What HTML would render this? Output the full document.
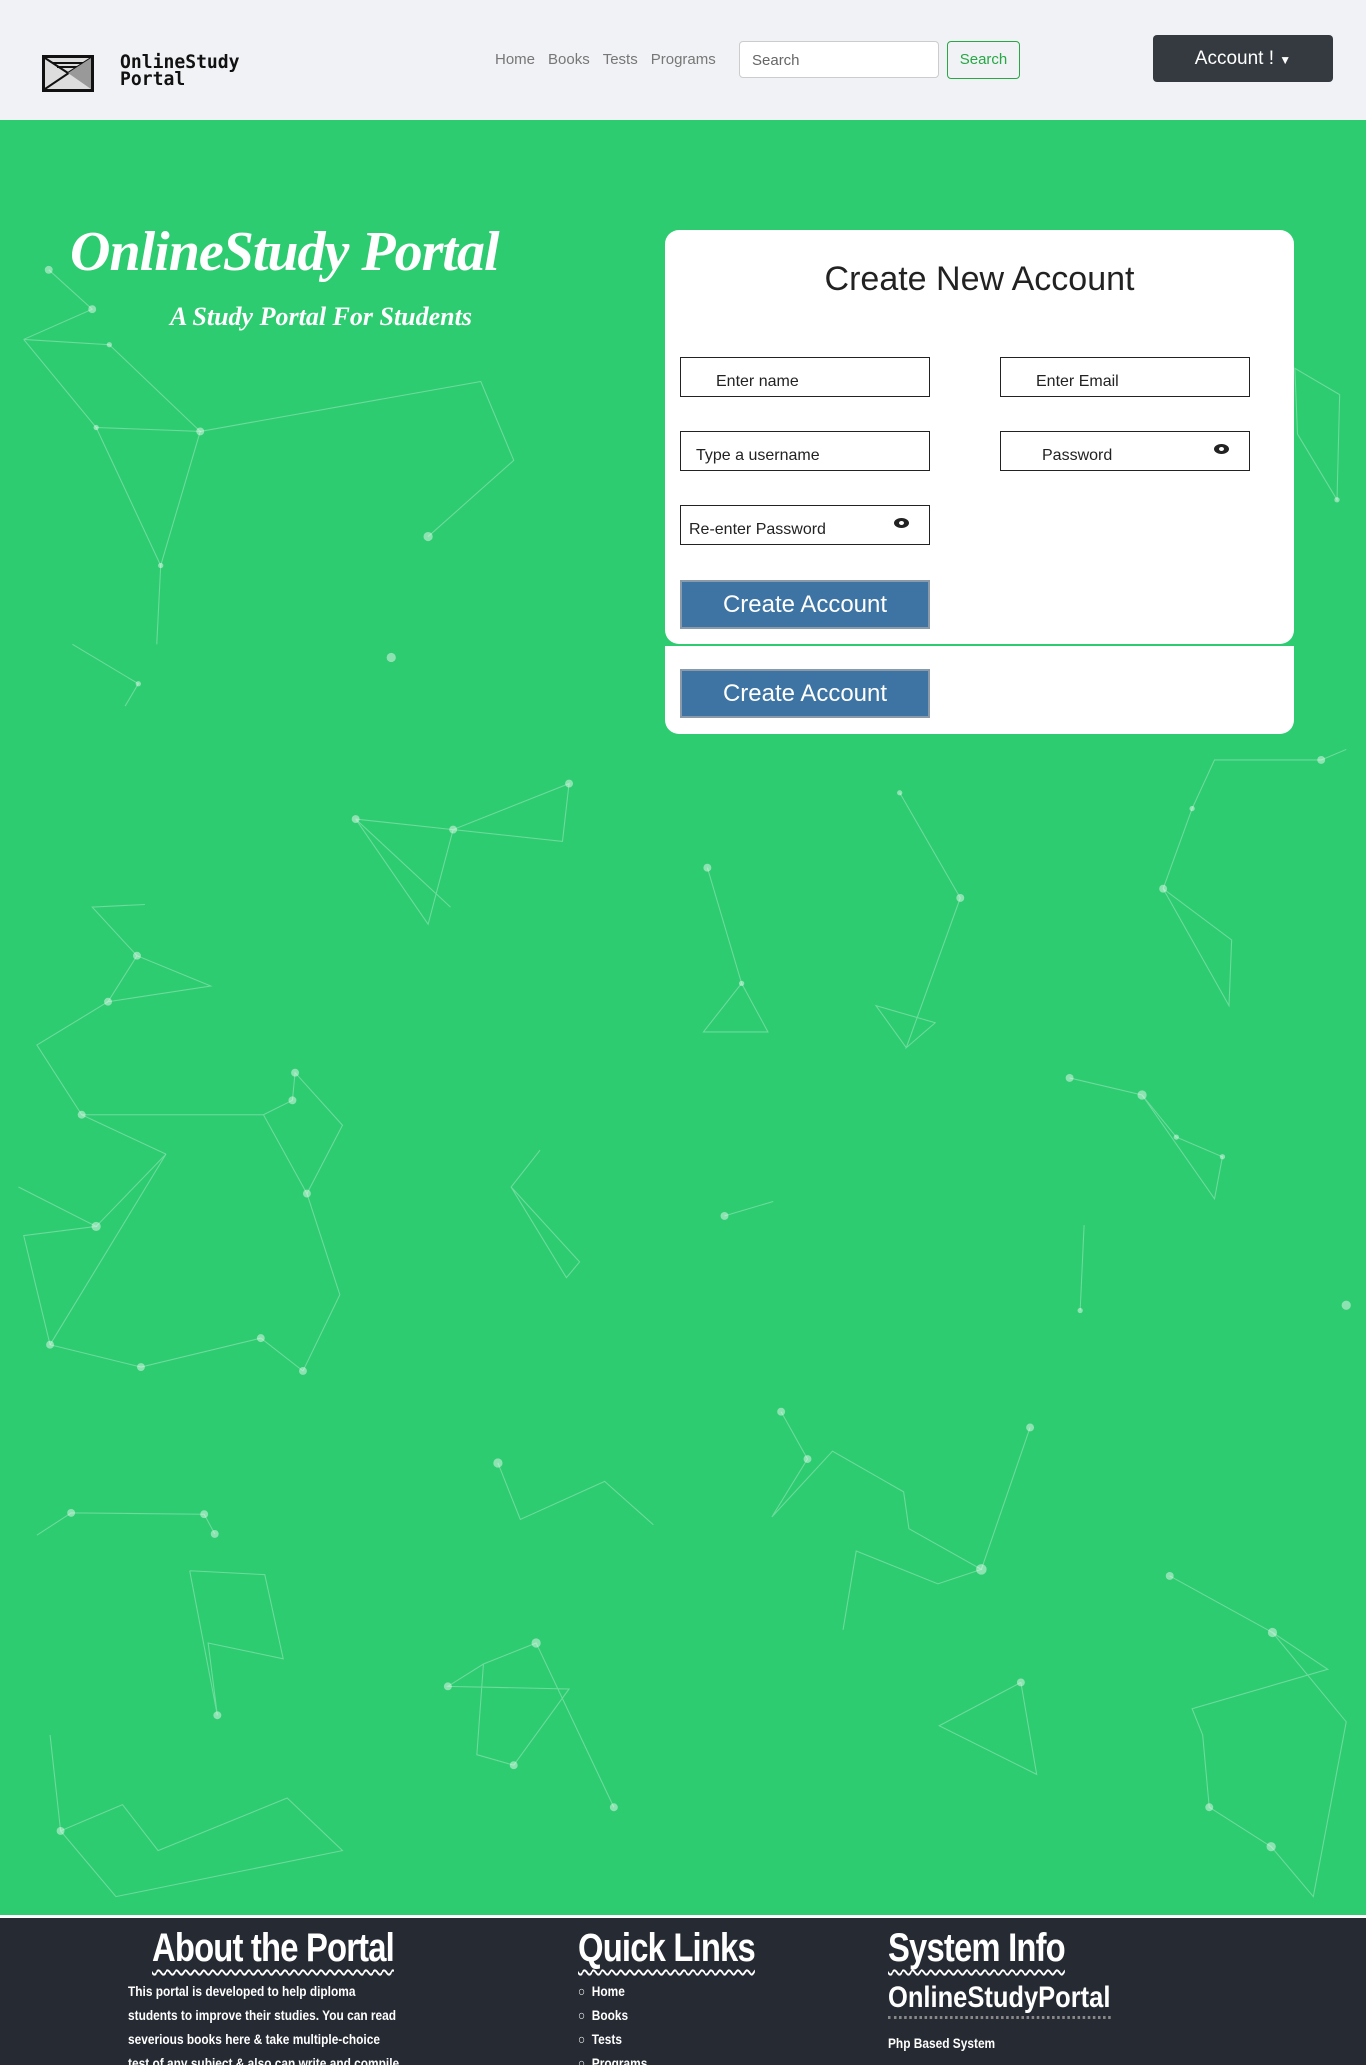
<!DOCTYPE html>
<html style="overflow:hidden;background:#262a33"><head><meta charset="utf-8"><style>
*{box-sizing:border-box;margin:0;padding:0}
body{width:1366px;height:2065px;overflow:hidden;font-family:"Liberation Sans",sans-serif;background:#2ecc71;position:relative}
.nav{position:absolute;left:0;top:0;width:1366px;height:120px;background:#f0f2f5}
.logo{position:absolute;left:42px;top:55px;width:52px;height:37px;border:3px solid #111;background:#ddd}
.logotxt{position:absolute;left:120px;top:54px;font:bold 19px/17px "DejaVu Sans Mono","Liberation Mono",monospace;color:#111;transform:scaleX(0.95);transform-origin:left}
.links{position:absolute;left:495px;top:51px;font-size:15px;color:#777}
.links span{margin-right:13px}
.sin{position:absolute;left:739px;top:41px;width:200px;height:37px;background:#fff;border:1px solid #ccc;border-radius:4px;font-size:15px;color:#666;padding:10px 12px}
.sbtn{position:absolute;left:947px;top:41px;width:73px;height:38px;border:1px solid #28a745;border-radius:4px;color:#28a745;font-size:15px;text-align:center;line-height:36px}
.acc{position:absolute;left:1153px;top:35px;width:180px;height:47px;background:#343a40;border-radius:4px;color:#fff;font-size:19px;text-align:center;line-height:47px}
.title{position:absolute;left:70px;top:220px;font:italic bold 56px "Liberation Serif",serif;color:#fff;letter-spacing:-1px}
.sub{position:absolute;left:170px;top:302px;font:italic bold 26px "Liberation Serif",serif;color:#fff}
.card{position:absolute;left:665px;top:230px;width:629px;height:414px;background:#fff;border-radius:14px}
.card2{position:absolute;left:665px;top:646px;width:629px;height:88px;background:#fff;border-radius:0 0 14px 14px}
.h{position:absolute;left:0;width:629px;top:30px;text-align:center;font-size:34px;color:#222}
.in{position:absolute;width:250px;height:40px;border:1.5px solid #222;font-size:16px;color:#222;padding-top:15px}
.eye{position:absolute;right:20px;top:12px;width:15px;height:10px;border-radius:50%;background:#222}
.eye:after{content:"";position:absolute;left:5px;top:3px;width:5px;height:4px;border-radius:50%;background:#fff}
.btn{position:absolute;left:15px;width:250px;height:49px;background:#3e74a3;border:2px solid #8a9aa8;color:#fff;font-size:24px;text-align:center;line-height:45px}
.foot{position:absolute;left:0;top:1915px;width:1366px;height:200px;background:#262a33;border-top:3px solid #fff}
.fh{position:absolute;top:8px;font:bold 40px "Liberation Sans",sans-serif;color:#fff;letter-spacing:-1px;text-decoration:underline wavy #fff;text-underline-offset:8px;text-decoration-thickness:2px;transform:scaleX(0.82);transform-origin:left}
.ft{position:absolute;font:bold 14px/24px "Liberation Sans",sans-serif;color:#fff;transform:scaleX(0.85);transform-origin:left;white-space:nowrap}
</style></head><body>
<svg style="position:absolute;left:0;top:120px" width="1366" height="1795" viewBox="0 91 1037 1366" preserveAspectRatio="none">
<g stroke="rgba(255,255,255,0.3)" stroke-width="0.8" fill="none">
<polyline points="37,205 70,235 18,258 83,262 152,328 73,325 18,258"/><polyline points="152,328 122,430 73,325"/><polyline points="325,408 390,350 365,290 152,328"/><polyline points="122,430 119,490"/><polyline points="55,490 105,520 95,537"/>
<polyline points="270,623 344,631 432,596 427,640 344,631 325,703 270,623 342,690"/><polyline points="537,660 563,748 534,785 583,785 563,748"/><polyline points="683,603 729,683 688,797 710,778 665,765 688,797"/>
<polyline points="883,676 935,715 933,765 883,676 905,615 922,578 1003,578 1022,570"/><polyline points="812,820 867,833 893,865 928,880 922,912 867,833"/><polyline points="823,932 820,997"/><polyline points="550,925 587,914"/><polyline points="388,903 440,960 430,972 388,903 410,875"/>
<polyline points="104,727 82,762 160,750 104,727 70,690 110,688"/><polyline points="82,762 28,795 62,848 126,878 62,848 200,848 222,837 224,816 260,856 233,908 200,848"/><polyline points="14,903 73,933 18,940 38,1023 107,1040 198,1018 230,1043 258,985 233,908"/><polyline points="73,933 126,878 38,1023"/>
<polyline points="593,1074 613,1110 586,1154 632,1104 686,1135 690,1163 745,1194 712,1205 650,1180 640,1240"/><polyline points="782,1086 745,1194"/><polyline points="888,1199 966,1242 1008,1270 905,1300 913,1320 918,1375 965,1405 997,1443 1022,1310 966,1242"/><polyline points="775,1280 787,1350 713,1313 775,1280"/>
<polyline points="378,1113 395,1156 459,1127 496,1160"/><polyline points="163,1167 155,1152 54,1151 28,1168"/><polyline points="144,1195 201,1198 215,1262 158,1250 165,1305 144,1195"/><polyline points="407,1250 367,1266 340,1283 432,1285 390,1343 362,1335 367,1266 407,1250 466,1375"/><polyline points="38,1320 46,1393 93,1373 120,1408 218,1368 260,1408 88,1443 46,1393"/><polyline points="1017,300 1015,380 985,330 983,280 1017,300"/>
</g>
<g fill="rgba(255,255,255,0.45)">
<circle cx="37" cy="205" r="3"/><circle cx="70" cy="235" r="3"/><circle cx="83" cy="262" r="2"/><circle cx="152" cy="328" r="3"/><circle cx="73" cy="325" r="2"/><circle cx="122" cy="430" r="2"/><circle cx="325" cy="408" r="3.5"/><circle cx="297" cy="500" r="3.5"/><circle cx="105" cy="520" r="2"/><circle cx="270" cy="623" r="3"/><circle cx="344" cy="631" r="3"/><circle cx="432" cy="596" r="3"/><circle cx="537" cy="660" r="3"/><circle cx="563" cy="748" r="2"/><circle cx="683" cy="603" r="2"/><circle cx="729" cy="683" r="3"/><circle cx="883" cy="676" r="3"/><circle cx="905" cy="615" r="2"/><circle cx="1003" cy="578" r="3"/><circle cx="812" cy="820" r="3"/><circle cx="867" cy="833" r="3.5"/><circle cx="893" cy="865" r="2"/><circle cx="928" cy="880" r="2"/><circle cx="820" cy="997" r="2"/><circle cx="1022" cy="993" r="3.5"/><circle cx="550" cy="925" r="3"/><circle cx="104" cy="727" r="3"/><circle cx="82" cy="762" r="3"/><circle cx="62" cy="848" r="3"/><circle cx="222" cy="837" r="3"/><circle cx="224" cy="816" r="3"/><circle cx="233" cy="908" r="3"/><circle cx="73" cy="933" r="3.5"/><circle cx="38" cy="1023" r="3"/><circle cx="107" cy="1040" r="3"/><circle cx="198" cy="1018" r="3"/><circle cx="230" cy="1043" r="3"/><circle cx="593" cy="1074" r="3"/><circle cx="613" cy="1110" r="3"/><circle cx="782" cy="1086" r="3"/><circle cx="745" cy="1194" r="4"/><circle cx="888" cy="1199" r="3"/><circle cx="966" cy="1242" r="3.5"/><circle cx="918" cy="1375" r="3"/><circle cx="965" cy="1405" r="3.5"/><circle cx="775" cy="1280" r="3"/><circle cx="378" cy="1113" r="3.5"/><circle cx="163" cy="1167" r="3"/><circle cx="155" cy="1152" r="3"/><circle cx="54" cy="1151" r="3"/><circle cx="407" cy="1250" r="3.5"/><circle cx="340" cy="1283" r="3"/><circle cx="390" cy="1343" r="3"/><circle cx="466" cy="1375" r="3"/><circle cx="46" cy="1393" r="3"/><circle cx="165" cy="1305" r="3"/><circle cx="1015" cy="380" r="2"/>
</g></svg>
<div class="nav">
<div class="logo"><svg width="46" height="31" viewBox="0 0 46 31"><path d="M0 0L23 15L46 0M0 31L46 0M8 5H38M12 9H34" stroke="#111" stroke-width="2" fill="none"/><path d="M23 15L46 0V31Z" fill="#999"/></svg></div>
<div class="logotxt">OnlineStudy<br>Portal</div>
<div class="links"><span>Home</span><span>Books</span><span>Tests</span><span>Programs</span></div>
<div class="sin">Search</div><div class="sbtn">Search</div>
<div class="acc">Account ! <span style="font-size:12px">▼</span></div>
</div>
<div class="title">OnlineStudy Portal</div>
<div class="sub">A Study Portal For Students</div>
<div class="card">
<div class="h">Create New Account</div>
<div class="in" style="left:15px;top:127px;padding-left:35px">Enter name</div>
<div class="in" style="left:335px;top:127px;padding-left:35px">Enter Email</div>
<div class="in" style="left:15px;top:201px;padding-left:15px">Type a username</div>
<div class="in" style="left:335px;top:201px;padding-left:41px">Password<div class="eye"></div></div>
<div class="in" style="left:15px;top:275px;padding-left:8px">Re-enter Password<div class="eye" style="right:20px"></div></div>
<div class="btn" style="top:350px">Create Account</div>
</div>
<div class="card2"><div class="btn" style="top:23px">Create Account</div></div>
<div class="foot">
<div class="fh" style="left:152px">About the Portal</div>
<div class="fh" style="left:578px">Quick Links</div>
<div class="fh" style="left:888px">System Info</div>
<div class="ft" style="left:128px;top:61px">This portal is developed to help diploma<br>students to improve their studies. You can read<br>severious books here &amp; take multiple-choice<br>test of any subject &amp; also can write and compile</div>
<div class="ft" style="left:578px;top:61px">○ &nbsp;Home<br>○ &nbsp;Books<br>○ &nbsp;Tests<br>○ &nbsp;Programs</div>
<div class="ft" style="left:888px;top:62px;font-size:30px;line-height:36px;border-bottom:3px dotted #888">OnlineStudyPortal</div>
<div class="ft" style="left:888px;top:113px">Php Based System</div>
</div>
</body></html>
